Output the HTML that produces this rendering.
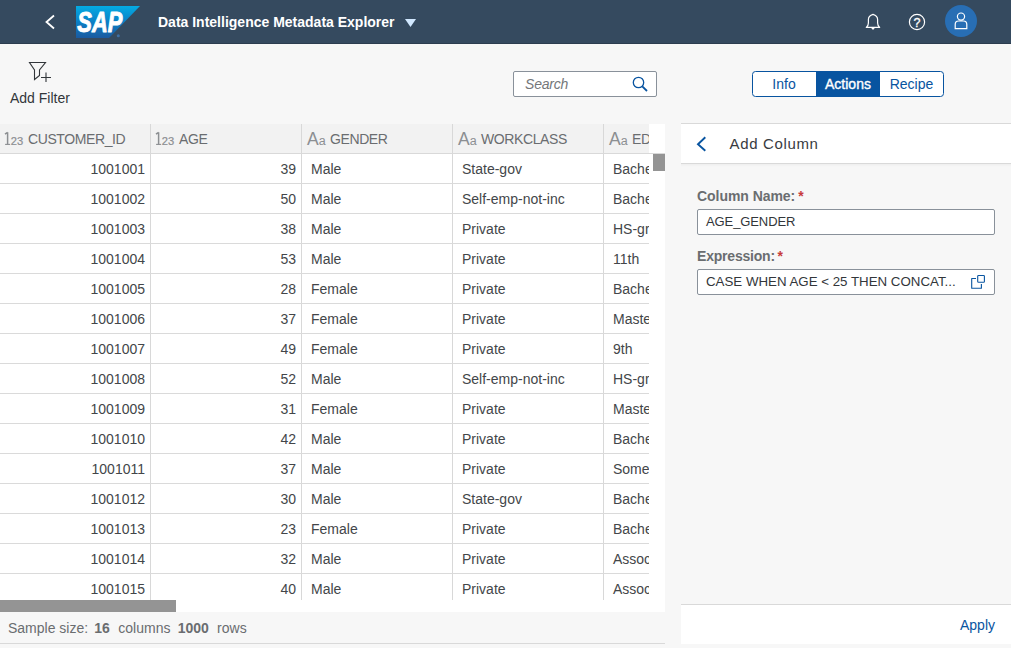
<!DOCTYPE html><html><head><meta charset="utf-8"><style>
*{box-sizing:border-box;margin:0;padding:0}
html,body{width:1011px;height:648px;overflow:hidden;background:#f7f7f7;font-family:"Liberation Sans",sans-serif;color:#32363a;font-size:14px}
.a{position:absolute;white-space:nowrap}
#shell{position:absolute;left:0;top:0;width:1011px;height:44px;background:#354a5f;border-bottom:1px solid #2c3d4f}
#title{left:158px;top:14px;color:#fff;font-weight:bold;font-size:14px;line-height:16px}
#tbl{position:absolute;left:0;top:124px;width:665px;height:488px;background:#fff;overflow:hidden}
#hdr{position:absolute;left:0;top:0;width:649px;height:30px;background:#f2f2f2;border-bottom:1px solid #d9d9d9}
.vl{position:absolute;top:0;width:1px;height:476px;background:#d8d8d8}
.hl{position:absolute;left:0;width:649px;height:1px;background:#dadada}
.t{position:absolute;white-space:nowrap;line-height:16px;color:#434649}
.h{position:absolute;white-space:nowrap;line-height:16px;color:#6a6d70;letter-spacing:-0.4px}
.ic{position:absolute;color:#8c8f92;font-family:"Liberation Serif",serif}
</style></head><body>
<div id="shell">
<svg class="a" style="left:0;top:0" width="1011" height="44"><polyline points="54,15.5 46.5,22 54,28.5" fill="none" stroke="#fff" stroke-width="1.8"/><defs><linearGradient id="g" x1="0" y1="0" x2="0" y2="1"><stop offset="0" stop-color="#04abe3"/><stop offset="0.5" stop-color="#0b80c6"/><stop offset="1" stop-color="#1a5aa0"/></linearGradient></defs><polygon points="76,6 140,6 109,38 76,38" fill="url(#g)"/><text x="77.3" y="32" fill="#fff" stroke="#fff" stroke-width="1" stroke-linejoin="round" font-family="Liberation Sans" font-weight="bold" font-style="italic" font-size="29.5" textLength="45" lengthAdjust="spacingAndGlyphs">SAP</text><circle cx="118.3" cy="35.8" r="1.5" fill="#3d6fa5"/><polygon points="405,19 416,19 410.5,27" fill="#d1e8ff"/><path d="M866.3,27.4 C867.8,26.2 868.4,25 868.4,23 L868.4,19.5 C868.4,16.8 870.2,15.3 873,14.4 C875.8,15.3 877.6,16.8 877.6,19.5 L877.6,23 C877.6,25 878.2,26.2 879.7,27.4 Z" fill="none" stroke="#fff" stroke-width="1.2" stroke-linejoin="round"/><path d="M871.2,28 L874.8,28 L873,30 Z" fill="#fff"/><circle cx="917" cy="22" r="7.6" fill="none" stroke="#fff" stroke-width="1.2"/><text x="917" y="26.5" text-anchor="middle" fill="#fff" font-family="Liberation Sans" font-size="12.5" stroke="#fff" stroke-width="0.3">?</text><circle cx="961" cy="21" r="16" fill="#286eb4"/><circle cx="961" cy="16.6" r="3.6" fill="none" stroke="#fff" stroke-width="1.2"/><path d="M955.2,28.6 L955.2,24.5 Q955.2,21 958.5,21 L963.5,21 Q966.8,21 966.8,24.5 L966.8,28.6 Z" fill="none" stroke="#fff" stroke-width="1.2"/></svg>
<div id="title" class="a">Data Intelligence Metadata Explorer</div>
</div>
<svg class="a" style="left:0;top:44px" width="100" height="60"><path d="M29.5,18.5 L45.5,18.5 L39.5,26 L39.5,31.5 L34.5,35.5 L34.5,26 Z" fill="none" stroke="#32363a" stroke-width="1.1" stroke-linejoin="miter"/><path d="M41,33.5 H51 M46,28.5 V38" stroke="#32363a" stroke-width="1.1"/></svg>
<div class="a" style="left:10px;top:90px;line-height:16px;color:#32363a">Add Filter</div>
<div class="a" style="left:513px;top:71px;width:144px;height:26px;background:#fff;border:1px solid #89919a;border-radius:2px"></div>
<div class="a" style="left:525px;top:76px;line-height:16px;color:#74777a;font-style:italic;letter-spacing:-0.2px">Search</div>
<svg class="a" style="left:620px;top:71px" width="37" height="26"><circle cx="18.5" cy="11.5" r="5.2" fill="none" stroke="#0854a0" stroke-width="1.3"/><path d="M22.3,15.3 L27,20" stroke="#0854a0" stroke-width="1.8"/></svg>
<div class="a" style="left:752px;top:71px;width:192px;height:26px;border:1px solid #0854a0;border-radius:3.5px;background:#fff;overflow:hidden"><div class="a" style="left:63px;top:0;width:64px;height:24px;background:#0854a0"></div><div class="a" style="left:0;top:0;width:63px;height:24px;line-height:24px;text-align:center;color:#0854a0;text-indent:-1px">Info</div><div class="a" style="left:63px;top:0;width:64px;height:24px;line-height:24px;text-align:center;color:#fff;-webkit-text-stroke:0.35px #fff">Actions</div><div class="a" style="left:127px;top:0;width:63px;height:24px;line-height:24px;text-align:center;color:#0854a0">Recipe</div></div>
<div id="tbl">
<div id="hdr"></div>
<div class="a" style="left:0;top:29px;width:665px;height:1px;background:#d9d9d9;z-index:2"></div>
<div class="vl" style="left:150px"></div>
<div class="vl" style="left:301px"></div>
<div class="vl" style="left:452px"></div>
<div class="vl" style="left:603px"></div>
<div class="hl" style="top:59px"></div>
<div class="hl" style="top:89px"></div>
<div class="hl" style="top:119px"></div>
<div class="hl" style="top:149px"></div>
<div class="hl" style="top:179px"></div>
<div class="hl" style="top:209px"></div>
<div class="hl" style="top:239px"></div>
<div class="hl" style="top:269px"></div>
<div class="hl" style="top:299px"></div>
<div class="hl" style="top:329px"></div>
<div class="hl" style="top:359px"></div>
<div class="hl" style="top:389px"></div>
<div class="hl" style="top:419px"></div>
<div class="hl" style="top:449px"></div>
<div class="hl" style="top:479px"></div>
<svg class="a" style="left:0px;top:0" width="26" height="30"><path d="M7.6,8.3 V20.6 M5,10.2 L7.6,8.3" fill="none" stroke="#8c8f92" stroke-width="1.5"/><path d="M5.1,20.4 H10.1" stroke="#8c8f92" stroke-width="1.1"/><text x="10.8" y="20.9" font-family="Liberation Sans" font-size="10.4" fill="#8c8f92" stroke="#8c8f92" stroke-width="0.2" textLength="12.4" lengthAdjust="spacingAndGlyphs">23</text></svg>
<div class="h" style="left:28px;top:7px">CUSTOMER_ID</div>
<svg class="a" style="left:151px;top:0" width="26" height="30"><path d="M7.6,8.3 V20.6 M5,10.2 L7.6,8.3" fill="none" stroke="#8c8f92" stroke-width="1.5"/><path d="M5.1,20.4 H10.1" stroke="#8c8f92" stroke-width="1.1"/><text x="10.8" y="20.9" font-family="Liberation Sans" font-size="10.4" fill="#8c8f92" stroke="#8c8f92" stroke-width="0.2" textLength="12.4" lengthAdjust="spacingAndGlyphs">23</text></svg>
<div class="h" style="left:179px;top:7px">AGE</div>
<div class="ic" style="left:307px;top:5px;line-height:20px;font-family:Liberation Sans"><span style="font-size:17.5px">A</span><span style="font-size:12.5px">a</span></div>
<div class="h" style="left:330px;top:7px">GENDER</div>
<div class="ic" style="left:458px;top:5px;line-height:20px;font-family:Liberation Sans"><span style="font-size:17.5px">A</span><span style="font-size:12.5px">a</span></div>
<div class="h" style="left:481px;top:7px">WORKCLASS</div>
<div class="ic" style="left:609px;top:5px;line-height:20px;font-family:Liberation Sans"><span style="font-size:17.5px">A</span><span style="font-size:12.5px">a</span></div>
<div class="h" style="left:632px;top:7px">EDUCATION</div>
<div class="t" style="left:0;width:145px;text-align:right;top:37px">1001001</div>
<div class="t" style="left:151px;width:145px;text-align:right;top:37px">39</div>
<div class="t" style="left:311px;top:37px">Male</div>
<div class="t" style="left:462px;top:37px">State-gov</div>
<div class="t" style="left:613px;top:37px">Bachelors</div>
<div class="t" style="left:0;width:145px;text-align:right;top:67px">1001002</div>
<div class="t" style="left:151px;width:145px;text-align:right;top:67px">50</div>
<div class="t" style="left:311px;top:67px">Male</div>
<div class="t" style="left:462px;top:67px">Self-emp-not-inc</div>
<div class="t" style="left:613px;top:67px">Bachelors</div>
<div class="t" style="left:0;width:145px;text-align:right;top:97px">1001003</div>
<div class="t" style="left:151px;width:145px;text-align:right;top:97px">38</div>
<div class="t" style="left:311px;top:97px">Male</div>
<div class="t" style="left:462px;top:97px">Private</div>
<div class="t" style="left:613px;top:97px">HS-grad</div>
<div class="t" style="left:0;width:145px;text-align:right;top:127px">1001004</div>
<div class="t" style="left:151px;width:145px;text-align:right;top:127px">53</div>
<div class="t" style="left:311px;top:127px">Male</div>
<div class="t" style="left:462px;top:127px">Private</div>
<div class="t" style="left:613px;top:127px">11th</div>
<div class="t" style="left:0;width:145px;text-align:right;top:157px">1001005</div>
<div class="t" style="left:151px;width:145px;text-align:right;top:157px">28</div>
<div class="t" style="left:311px;top:157px">Female</div>
<div class="t" style="left:462px;top:157px">Private</div>
<div class="t" style="left:613px;top:157px">Bachelors</div>
<div class="t" style="left:0;width:145px;text-align:right;top:187px">1001006</div>
<div class="t" style="left:151px;width:145px;text-align:right;top:187px">37</div>
<div class="t" style="left:311px;top:187px">Female</div>
<div class="t" style="left:462px;top:187px">Private</div>
<div class="t" style="left:613px;top:187px">Masters</div>
<div class="t" style="left:0;width:145px;text-align:right;top:217px">1001007</div>
<div class="t" style="left:151px;width:145px;text-align:right;top:217px">49</div>
<div class="t" style="left:311px;top:217px">Female</div>
<div class="t" style="left:462px;top:217px">Private</div>
<div class="t" style="left:613px;top:217px">9th</div>
<div class="t" style="left:0;width:145px;text-align:right;top:247px">1001008</div>
<div class="t" style="left:151px;width:145px;text-align:right;top:247px">52</div>
<div class="t" style="left:311px;top:247px">Male</div>
<div class="t" style="left:462px;top:247px">Self-emp-not-inc</div>
<div class="t" style="left:613px;top:247px">HS-grad</div>
<div class="t" style="left:0;width:145px;text-align:right;top:277px">1001009</div>
<div class="t" style="left:151px;width:145px;text-align:right;top:277px">31</div>
<div class="t" style="left:311px;top:277px">Female</div>
<div class="t" style="left:462px;top:277px">Private</div>
<div class="t" style="left:613px;top:277px">Masters</div>
<div class="t" style="left:0;width:145px;text-align:right;top:307px">1001010</div>
<div class="t" style="left:151px;width:145px;text-align:right;top:307px">42</div>
<div class="t" style="left:311px;top:307px">Male</div>
<div class="t" style="left:462px;top:307px">Private</div>
<div class="t" style="left:613px;top:307px">Bachelors</div>
<div class="t" style="left:0;width:145px;text-align:right;top:337px">1001011</div>
<div class="t" style="left:151px;width:145px;text-align:right;top:337px">37</div>
<div class="t" style="left:311px;top:337px">Male</div>
<div class="t" style="left:462px;top:337px">Private</div>
<div class="t" style="left:613px;top:337px">Some-college</div>
<div class="t" style="left:0;width:145px;text-align:right;top:367px">1001012</div>
<div class="t" style="left:151px;width:145px;text-align:right;top:367px">30</div>
<div class="t" style="left:311px;top:367px">Male</div>
<div class="t" style="left:462px;top:367px">State-gov</div>
<div class="t" style="left:613px;top:367px">Bachelors</div>
<div class="t" style="left:0;width:145px;text-align:right;top:397px">1001013</div>
<div class="t" style="left:151px;width:145px;text-align:right;top:397px">23</div>
<div class="t" style="left:311px;top:397px">Female</div>
<div class="t" style="left:462px;top:397px">Private</div>
<div class="t" style="left:613px;top:397px">Bachelors</div>
<div class="t" style="left:0;width:145px;text-align:right;top:427px">1001014</div>
<div class="t" style="left:151px;width:145px;text-align:right;top:427px">32</div>
<div class="t" style="left:311px;top:427px">Male</div>
<div class="t" style="left:462px;top:427px">Private</div>
<div class="t" style="left:613px;top:427px">Assoc-acdm</div>
<div class="t" style="left:0;width:145px;text-align:right;top:457px">1001015</div>
<div class="t" style="left:151px;width:145px;text-align:right;top:457px">40</div>
<div class="t" style="left:311px;top:457px">Male</div>
<div class="t" style="left:462px;top:457px">Private</div>
<div class="t" style="left:613px;top:457px">Assoc-voc</div>
<div class="a" style="left:649px;top:0;width:16px;height:488px;background:#fff"></div>
<div class="a" style="left:653px;top:30px;width:12px;height:17px;background:#949494"></div>
<div class="a" style="left:0;top:476px;width:665px;height:12px;background:#fff"></div>
<div class="a" style="left:0;top:476px;width:176px;height:12px;background:#949494"></div>
</div>
<div class="a" style="left:8.0px;top:620px;line-height:16px;color:#6a6d70;">Sample size:</div>
<div class="a" style="left:94.2px;top:620px;line-height:16px;color:#6a6d70;font-weight:bold;">16</div>
<div class="a" style="left:118.3px;top:620px;line-height:16px;color:#6a6d70;">columns</div>
<div class="a" style="left:177.7px;top:620px;line-height:16px;color:#6a6d70;font-weight:bold;">1000</div>
<div class="a" style="left:217.1px;top:620px;line-height:16px;color:#6a6d70;">rows</div>
<div class="a" style="left:0;top:643px;width:665px;height:1px;background:#d9d9d9"></div>
<div class="a" style="left:681px;top:123px;width:330px;height:41px;background:#fff;border-top:1px solid #d9d9d9;border-bottom:1px solid #d9d9d9"></div>
<div class="a" style="left:681px;top:164px;width:330px;height:3px;background:linear-gradient(rgba(0,0,0,0.035),rgba(0,0,0,0))"></div>
<svg class="a" style="left:681px;top:124px" width="40" height="40"><polyline points="24.3,13.3 17,20.2 24.3,26.7" fill="none" stroke="#0854a0" stroke-width="1.9"/></svg>
<div class="a" style="left:729.5px;top:135px;font-size:15px;line-height:18px;color:#383b3f;letter-spacing:0.65px">Add Column</div>
<div class="a" style="left:697px;top:188px;line-height:16px;color:#6a6d70;font-weight:bold;letter-spacing:-0.05px">Column Name:<span style="color:#c73c3c;margin-left:3px">*</span></div>
<div class="a" style="left:697px;top:209px;width:298px;height:26px;background:#fff;border:1px solid #89919a;border-radius:2px"></div>
<div class="a" style="left:706px;top:214px;line-height:16px;color:#32363a;font-size:13px;letter-spacing:-0.1px">AGE_GENDER</div>
<div class="a" style="left:697px;top:248px;line-height:16px;color:#6a6d70;font-weight:bold;letter-spacing:-0.2px">Expression:<span style="color:#c73c3c;margin-left:2.5px">*</span></div>
<div class="a" style="left:697px;top:269px;width:298px;height:26px;background:#fff;border:1px solid #89919a;border-radius:2px"></div>
<div class="a" style="left:706px;top:274px;line-height:16px;color:#32363a;font-size:13.3px">CASE WHEN AGE &lt; 25 THEN CONCAT...</div>
<svg class="a" style="left:970px;top:274px" width="18" height="18"><rect x="7.7" y="1.5" width="6.7" height="6.7" rx="0.8" fill="none" stroke="#0854a0" stroke-width="1.1"/><path d="M6,4.5 H1.7 V14.3 H11.4 V10.1" fill="none" stroke="#0854a0" stroke-width="1.1" stroke-linejoin="round"/></svg>
<div class="a" style="left:681px;top:604px;width:330px;height:40px;background:#fff;border-top:1px solid #d9d9d9"></div>
<div class="a" style="left:960px;top:617px;line-height:16px;color:#0854a0">Apply</div>
</body></html>
